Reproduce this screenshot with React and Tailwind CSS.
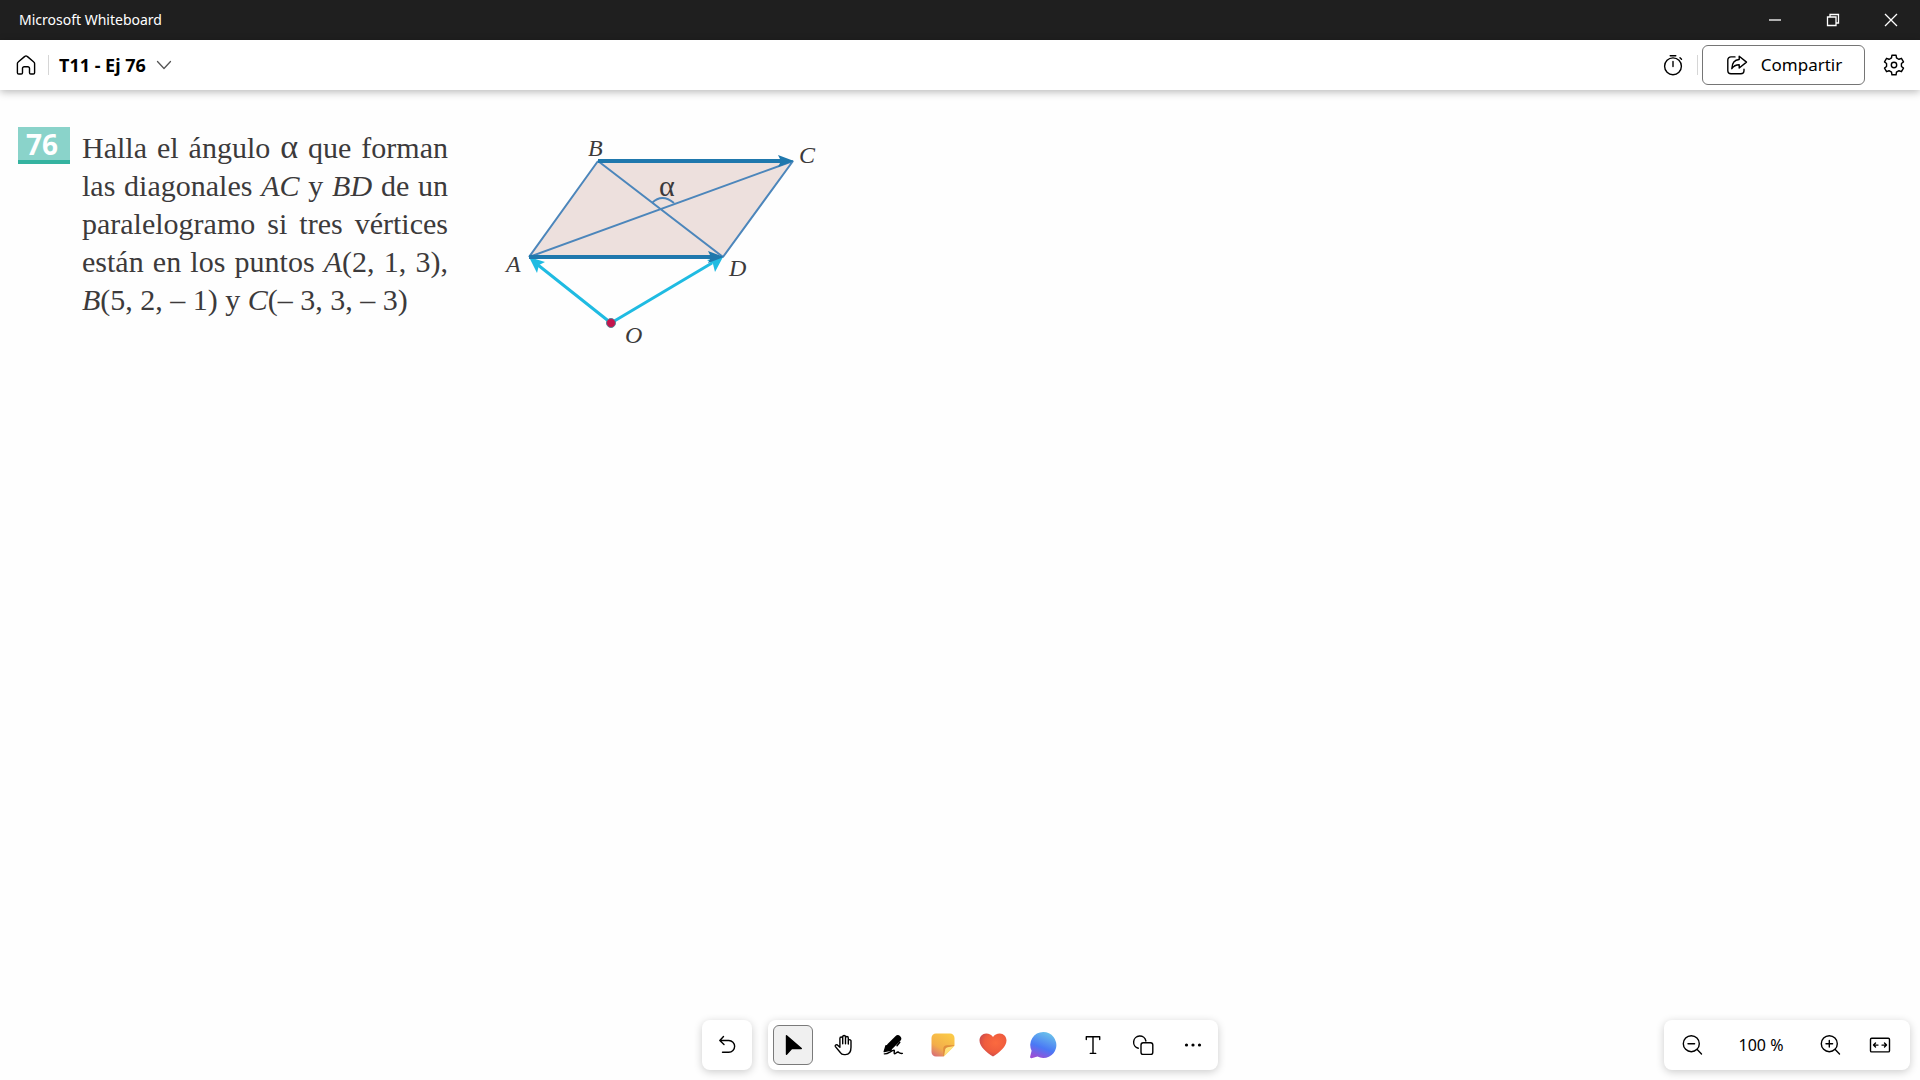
/**
 * App.jsx
 *
 * Whiteboard window: title bar, board header, canvas and floating toolbars.
 */

import React, { useState } from 'react';

// Shared wrapper for the outline icons, drawn on a 24px grid
const Icon = ({ children, className = 'w-6 h-6' }) => (
  <svg
    viewBox="0 0 24 24"
    className={className}
    fill="none"
    stroke="currentColor"
    strokeWidth="1.4"
    strokeLinecap="round"
    strokeLinejoin="round"
    aria-hidden="true"
  >
    {children}
  </svg>
);

const HomeIcon = () => (
  <Icon>
    <path d="M3.4 10.6c0-.6.3-1.2.8-1.6l6.6-5.6a1.8 1.8 0 0 1 2.4 0L19.8 9c.5.4.8 1 .8 1.6v9.1a1.3 1.3 0 0 1-1.3 1.3h-2.5a1.3 1.3 0 0 1-1.3-1.3v-4.4a1.6 1.6 0 0 0-1.6-1.6h-3.8a1.6 1.6 0 0 0-1.6 1.6v4.4A1.3 1.3 0 0 1 7.2 21H4.7a1.3 1.3 0 0 1-1.3-1.3z" />
  </Icon>
);

const TimerIcon = () => (
  <Icon>
    <circle cx="12" cy="13.3" r="8.4" />
    <path d="M9.2 2.7h5.6M12 8.5v5M19 4.8l1.5 1.4" />
  </Icon>
);

const ShareIcon = () => (
  <Icon>
    <path d="M10 3.9H6a3.2 3.2 0 0 0-3.2 3.2v10.4A3.2 3.2 0 0 0 6 20.7h9.8a3.2 3.2 0 0 0 3.2-3.2v-1.3" />
    <path d="M14.2 3.2 21.5 9.1l-7.3 5.9v-3.2c-3.5 0-5.7 1.2-7.4 3.9.2-5.3 2.7-8.9 7.4-9.2z" />
  </Icon>
);

// Outline of a six-toothed gear around (12, 12)
const gearPoints = [0, 60, 120, 180, 240, 300]
  .flatMap((tooth) => [
    [tooth - 30, 7.4],
    [tooth - 19, 7.6],
    [tooth - 12, 10],
    [tooth + 12, 10],
    [tooth + 19, 7.6],
  ])
  .map(([angle, radius]) => {
    const rad = (angle * Math.PI) / 180;
    return `${(12 + radius * Math.sin(rad)).toFixed(2)},${(12 - radius * Math.cos(rad)).toFixed(2)}`;
  })
  .join(' ');

const GearIcon = () => (
  <Icon>
    <polygon points={gearPoints} />
    <circle cx="12" cy="12" r="2.7" />
  </Icon>
);

const UndoIcon = () => (
  <Icon>
    <path d="M8.5 3.5 4.8 7.5l4.2 4M5 7.5h8.8a5.8 5.8 0 0 1 0 11.7H7.5" />
  </Icon>
);

const PointerIcon = () => (
  <Icon>
    <path d="M5.5 2.8v18.4l5.2-5.6h9.6z" fill="currentColor" />
  </Icon>
);

const HandIcon = () => (
  <Icon>
    <path d="M8.9 14.3V5.4a1.4 1.4 0 0 1 2.8 0v5.3M11.7 5.4V3.9a1.4 1.4 0 0 1 2.8 0v6.8M14.5 4.9a1.4 1.4 0 0 1 2.8 0v6.2M17.3 7.7a1.4 1.4 0 0 1 2.7 0v6.6c0 4.200-2 7.3-5.600 7.3h-1.300c-1.900 0-3-.8-4-2.300l-4.700-5.700c-.8-1.200.8-2.400 2-1.700l2.500 2.300" />
  </Icon>
);

const PenIcon = () => (
  <Icon>
    <path d="M16.8 5.6 9 13.4" strokeWidth="6.8" />
    <path d="M3.2 18.6 5 12.6l5.4 4.4z" fill="currentColor" />
    <path d="m18.8 9.2-2.8 3.6" />
    <path d="M3.3 20.9c3.9.3 7.2-3.6 9.6-3.6 1.4 0-.8 3.3 1 3.4 1.3 0 1.9-2 3.2-1.7 1 .4.8 1.7 4.3 1.4" />
  </Icon>
);

const NoteIcon = () => (
  <svg viewBox="0 0 24 24" className="w-6 h-6" aria-hidden="true">
    <defs>
      <linearGradient id="note" x1="0.7" y1="0" x2="0.1" y2="1">
        <stop offset="0" stopColor="#fbc947" />
        <stop offset="0.6" stopColor="#f3ae4b" />
        <stop offset="1" stopColor="#d76b79" />
      </linearGradient>
    </defs>
    <path d="M5 .5h14A4.500 4.500 0 0 1 23.500 5v7.500l-11 11H5A4.500 4.500 0 0 1 .5 19V5A4.500 4.500 0 0 1 5 .5z" fill="url(#note)" />
    <path d="M23.5 12.2 12.2 23.5v-7.3a4 4 0 0 1 4-4z" fill="#e08e3c" />
    <path d="M23.5 13 13 23.5l1.2-6.900a3 3 0 0 1 2.400-2.400z" fill="#ffe27c" />
  </svg>
);

const HeartIcon = () => (
  <svg viewBox="0 0 28 24" className="w-7 h-6" aria-hidden="true">
    <defs>
      <radialGradient id="heart" cx="0.6" cy="0.4" r="0.65">
        <stop offset="0" stopColor="#fb6a3f" />
        <stop offset="0.65" stopColor="#ef5c3e" />
        <stop offset="1" stopColor="#c64a50" />
      </radialGradient>
    </defs>
    <path d="M14 23.5C7.500 19.500.5 13.500.5 7.500.5 3.500 3.500.5 7.200.5c3 0 5.400 1.300 6.800 3.500C15.400 1.800 17.800.5 20.800.5c3.700 0 6.700 3 6.700 7 0 6-7 12-13.500 16z" fill="url(#heart)" />
  </svg>
);

const CommentIcon = () => (
  <svg viewBox="0 0 28 28" className="w-7 h-7" aria-hidden="true">
    <defs>
      <linearGradient id="comment" x1="0.7" y1="0" x2="0.3" y2="1">
        <stop offset="0" stopColor="#6cc4ea" />
        <stop offset="0.6" stopColor="#4a78f5" />
        <stop offset="1" stopColor="#9a4fd6" />
      </linearGradient>
    </defs>
    <path d="M14.3 1a13 13 0 1 1-5.800 24.600L2.500 27.200c-.9.200-1.600-.5-1.400-1.400l1.500-6A13 13 0 0 1 14.300 1z" fill="url(#comment)" />
  </svg>
);

const TextIcon = () => (
  <Icon>
    <path d="M5.300 6.500V3.700h13.400v2.800M12 3.700v16.700M9.300 20.400h5.400" />
  </Icon>
);

const ShapesIcon = () => (
  <Icon>
    <path d="M7.300 15.200A6.200 6.200 0 1 1 14.900 8" />
    <rect x="10" y="9.8" width="11.8" height="11.6" rx="2.2" />
  </Icon>
);

const MoreIcon = () => (
  <Icon>
    <g fill="currentColor" stroke="none">
      <circle cx="5.5" cy="12" r="1.6" />
      <circle cx="12" cy="12" r="1.6" />
      <circle cx="18.5" cy="12" r="1.6" />
    </g>
  </Icon>
);

const ZoomOutIcon = () => (
  <Icon>
    <circle cx="11.3" cy="10.7" r="8" />
    <path d="m17.2 16.6 4.3 4.3M8 10.7h6.6" />
  </Icon>
);

const ZoomInIcon = () => (
  <Icon>
    <circle cx="11.3" cy="10.7" r="8" />
    <path d="m17.2 16.6 4.3 4.3M8 10.7h6.6M11.3 7.4V14" />
  </Icon>
);

const FitIcon = () => (
  <Icon>
    <rect x="2.5" y="5.3" width="19" height="13.6" rx="1.2" />
    <path d="M10 12.1H5.8M7.5 10.1l-2 2 2 2M14 12.1h4.2M16.5 10.1l2 2-2 2" />
  </Icon>
);

const tools = [
  { id: 'select', label: 'Seleccionar', icon: PointerIcon },
  { id: 'pan', label: 'Mover', icon: HandIcon },
  { id: 'pen', label: 'Lápiz', icon: PenIcon },
  { id: 'note', label: 'Nota', icon: NoteIcon },
  { id: 'reaction', label: 'Reacción', icon: HeartIcon },
  { id: 'comment', label: 'Comentario', icon: CommentIcon },
  { id: 'text', label: 'Texto', icon: TextIcon },
  { id: 'shapes', label: 'Formas', icon: ShapesIcon },
  { id: 'more', label: 'Más', icon: MoreIcon },
];

const TitleBar = () => (
  <div className="h-10 bg-[#1f1f1f] text-white flex items-center justify-between">
    <span className="pl-[19px] text-sm">Microsoft Whiteboard</span>
    <div className="flex h-full">
      <button type="button" aria-label="Minimizar" className="w-[58px] h-full flex items-center justify-center">
        <svg viewBox="0 0 14 14" className="w-3.5 h-3.5" stroke="currentColor" strokeWidth="1.3">
          <path d="M1 7h12" />
        </svg>
      </button>
      <button type="button" aria-label="Restaurar" className="w-[58px] h-full flex items-center justify-center">
        <svg viewBox="0 0 14 14" className="w-3.5 h-3.5" fill="none" stroke="currentColor" strokeWidth="1.3">
          <path d="M1.5 4H10v8.5H1.5zM4 4V1.5h8.5V10H10" />
        </svg>
      </button>
      <button type="button" aria-label="Cerrar" className="w-[58px] h-full flex items-center justify-center">
        <svg viewBox="0 0 14 14" className="w-3.5 h-3.5" stroke="currentColor" strokeWidth="1.3">
          <path d="m1 1 12 12M13 1 1 13" />
        </svg>
      </button>
    </div>
  </div>
);

const BoardHeader = () => (
  <header className="h-[50px] bg-white flex items-center justify-between px-3.5 shadow-[0_2px_8px_rgba(0,0,0,0.28)]">
    <div className="flex items-center">
      <button type="button" aria-label="Inicio">
        <HomeIcon />
      </button>
      <div className="w-px h-5 bg-[#d6d6d6] mx-2.5" />
      <button type="button" className="flex items-center gap-2.5 text-lg font-bold">
        T11 - Ej 76
        <svg viewBox="0 0 16 16" className="w-4 h-4" fill="none" stroke="#555" strokeWidth="1.3" strokeLinecap="round" strokeLinejoin="round">
          <path d="m1.500 4.500 6.500 7 6.500-7" />
        </svg>
      </button>
    </div>
    <div className="flex items-center">
      <button type="button" aria-label="Temporizador">
        <TimerIcon />
      </button>
      <div className="w-px h-5 bg-[#d6d6d6] ml-3 mr-1" />
      <button
        type="button"
        className="w-[163px] h-10 border border-[#757575] rounded-md flex items-center justify-center gap-3 text-[17px]"
      >
        <ShareIcon />
        Compartir
      </button>
      <button type="button" aria-label="Configuración" className="ml-[17px]">
        <GearIcon />
      </button>
    </div>
  </header>
);

const Statement = () => (
  <section className="flex items-start gap-3">
    <div className="w-[52px] h-[37px] bg-[#8ad3ca] border-b-4 border-[#35b3a0] text-white text-[28px] leading-[34px] font-bold pl-2">
      76
    </div>
    <div className="w-[366px] pt-0.5 text-[30px] leading-[38px] text-[#3c3a3b] font-['Liberation_Serif',serif]">
      <p className="text-justify [text-align-last:justify]">
        Halla el ángulo <span className="text-[34px] leading-none">α</span> que forman
      </p>
      <p className="text-justify [text-align-last:justify]">
        las diagonales <i>AC</i> y <i>BD</i> de un
      </p>
      <p className="text-justify [text-align-last:justify]">paralelogramo si tres vértices</p>
      <p className="text-justify [text-align-last:justify]">
        están en los puntos <i>A</i>(2, 1, 3),
      </p>
      <p>
        <i>B</i>(5, 2, – 1) y <i>C</i>(– 3, 3, – 3)
      </p>
    </div>
  </section>
);

const Parallelogram = () => (
  <svg viewBox="0 0 340 240" className="w-[340px] h-60 shrink-0" role="img" aria-label="Paralelogramo ABCD">
    <path d="M109 41h195l-70 96H40z" fill="#ede0dd" />
    <g fill="none" stroke="#4c86bb" strokeWidth="2">
      <path d="M109 41 40 137M304 41l-70 96M40 137 304 41M109 41l125 96" />
      <path d="M163 83q10-10 22 0" />
    </g>
    {/* Vectors from the origin */}
    <g stroke="#1fbbe2" strokeWidth="3" fill="none">
      <path d="m122 203-73-58M122 203l101-60" />
    </g>
    <path d="m40 137 16 5-6 3-2 8zM234 137l-16 3 6 4 2 8z" fill="#1fbbe2" />
    {/* Parallel sides BC and AD */}
    <g stroke="#1f78ad" strokeWidth="4">
      <path d="M109 41h186M40 137h185" />
    </g>
    <path d="m305 41-16-6 3 6-3 6zM235 137l-16-6 3 6-3 6z" fill="#1f78ad" />
    <circle cx="122" cy="203" r="4.5" fill="#c4144c" stroke="#5b7f92" strokeWidth="1" />
    <g fill="#3c3a3b" className="text-2xl font-['Liberation_Serif',serif]">
      <g className="italic">
        <text x="99" y="36">B</text>
        <text x="310" y="43">C</text>
        <text x="17" y="152">A</text>
        <text x="240" y="156">D</text>
        <text x="136" y="223">O</text>
      </g>
      <text x="170" y="76" className="text-[30px]">α</text>
    </g>
  </svg>
);

export default function App() {
  const [activeTool, setActiveTool] = useState('select');

  return (
    <div className="min-h-screen flex flex-col bg-[#fefefe] text-black font-['Noto_Sans','Open_Sans',sans-serif]">
      <TitleBar />
      <BoardHeader />

      <main className="flex-1 flex items-start gap-[41px] pl-[18px] pt-[30px]">
        <div className="pt-[7px]">
          <Statement />
        </div>
        <Parallelogram />
      </main>

      <footer className="grid grid-cols-[1fr_auto_1fr] items-end pb-2.5 px-2.5">
        <div className="col-start-2 flex gap-4">
          <div className="bg-white rounded-lg p-[5px] shadow-[0_2px_8px_rgba(0,0,0,0.2)]">
            <button type="button" aria-label="Deshacer" className="w-10 h-10 flex items-center justify-center">
              <UndoIcon />
            </button>
          </div>
          <div className="bg-white rounded-lg p-[5px] flex gap-2.5 shadow-[0_2px_8px_rgba(0,0,0,0.2)]">
            {tools.map(({ id, label, icon: ToolIcon }) => (
              <button
                key={id}
                type="button"
                aria-label={label}
                aria-pressed={activeTool === id}
                onClick={() => setActiveTool(id)}
                className={`w-10 h-10 flex items-center justify-center rounded-md ${
                  activeTool === id ? 'bg-[#f0f0f0] border border-[#7a7a7a]' : ''
                }`}
              >
                <ToolIcon />
              </button>
            ))}
          </div>
        </div>

        <div className="justify-self-end bg-white rounded-lg py-[5px] pl-2 pr-2.5 flex items-center shadow-[0_2px_8px_rgba(0,0,0,0.2)]">
          <button type="button" aria-label="Alejar" className="w-10 h-10 flex items-center justify-center">
            <ZoomOutIcon />
          </button>
          <span className="w-[98px] text-center text-base">100 %</span>
          <button type="button" aria-label="Acercar" className="w-10 h-10 flex items-center justify-center">
            <ZoomInIcon />
          </button>
          <button type="button" aria-label="Ajustar a la pantalla" className="w-10 h-10 ml-2.5 flex items-center justify-center">
            <FitIcon />
          </button>
        </div>
      </footer>
    </div>
  );
}
